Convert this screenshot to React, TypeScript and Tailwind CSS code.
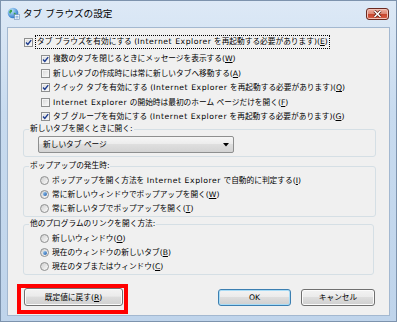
import type { ReactNode } from "react"

const font = "font-['DejaVu_Sans','Noto_Sans_CJK_JP',sans-serif]"

// latin runs are a bit wider in the original UI font
function Txt({ t }: { t: string }) {
  const parts = t.split("Internet Explorer")
  return (
    <>
      {parts.map((p, i) => (
        <span key={i}>
          {i > 0 && <span className="tracking-[0.55px]">Internet Explorer</span>}
          {p}
        </span>
      ))}
    </>
  )
}

function Key({ k }: { k: string }) {
  return (
    <>
      (<span className="underline underline-offset-[1px]">{k}</span>)
    </>
  )
}

function Check({ on }: { on?: boolean }) {
  return (
    <span className="flex h-[9px] w-[9px] shrink-0 items-center justify-center border border-[#8e8f8f] bg-gradient-to-br from-[#d6d6d6] to-[#fbfbfb] shadow-[inset_0_0_0_1px_#f4f4f4]">
      {on && (
        <svg viewBox="0 0 7 7" className="h-[7px] w-[7px]">
          <path d="M1 3.6 L2.8 5.5 L6.2 1.1" fill="none" stroke="#1c3b8f" strokeWidth="1.4" />
        </svg>
      )}
    </span>
  )
}

function Radio({ on }: { on?: boolean }) {
  return (
    <span className="flex h-[9px] w-[9px] shrink-0 items-center justify-center rounded-full border border-[#8e8f8f] bg-gradient-to-br from-[#cfcfcf] to-[#fbfbfb]">
      {on && <span className="h-[4px] w-[4px] rounded-full bg-gradient-to-br from-[#9fd0f7] to-[#1d5aa6]" />}
    </span>
  )
}

function Btn({ children, def, className = "" }: { children: ReactNode; def?: boolean; className?: string }) {
  return (
    <div
      className={`flex items-center justify-center rounded-[3px] border text-[7.7px] leading-none bg-[linear-gradient(#f3f3f3_0%,#ebebeb_45%,#dddddd_50%,#cfcfcf_100%)] ${
        def ? "border-[#3c7fb1] shadow-[inset_0_0_0_1px_#a9dcf6]" : "border-[#707070] shadow-[inset_0_0_0_1px_#fbfbfb]"
      } ${className}`}
    >
      {children}
    </div>
  )
}

const subs = [
  { t: "複数のタブを閉じるときにメッセージを表示する", k: "W", on: true },
  { t: "新しいタブの作成時には常に新しいタブへ移動する", k: "A", on: false },
  { t: "クイック タブを有効にする (Internet Explorer を再起動する必要があります)", k: "Q", on: true },
  { t: "Internet Explorer の開始時は最初のホーム ページだけを開く", k: "F", on: false },
  { t: "タブ グループを有効にする (Internet Explorer を再起動する必要があります)", k: "G", on: true },
]

const popups = [
  { t: "ポップアップを開く方法を Internet Explorer で自動的に判定する", k: "I", on: false },
  { t: "常に新しいウィンドウでポップアップを開く", k: "W", on: true },
  { t: "常に新しいタブでポップアップを開く", k: "T", on: false },
]

const links = [
  { t: "新しいウィンドウ", k: "O", on: false },
  { t: "現在のウィンドウの新しいタブ", k: "B", on: true },
  { t: "現在のタブまたはウィンドウ", k: "C", on: false },
]

function RadioRows({ items }: { items: { t: string; k: string; on: boolean }[] }) {
  return (
    <>
      {items.map((r) => (
        <div key={r.t} className="ml-[11px] flex h-[14px] items-center">
          <Radio on={r.on} />
          <span className="ml-[3px] whitespace-nowrap">
            <Txt t={r.t} />
            <Key k={r.k} />
          </span>
        </div>
      ))}
    </>
  )
}

export default function App() {
  return (
    <div
      className={`${font} flex h-[322px] w-[397px] flex-col border border-[#7d93ad] bg-[linear-gradient(180deg,#dde9f6_0%,#c8dbef_35%,#bfd4eb_100%)] text-black`}
    >
      {/* title bar */}
      <div className="flex h-[26px] shrink-0 items-start">
        <svg viewBox="0 0 13 13" className="ml-[6px] mt-[6px] h-[13px] w-[13px]">
          <defs>
            <radialGradient id="globe" cx="0.35" cy="0.3" r="0.8">
              <stop offset="0" stopColor="#c4e8ff" />
              <stop offset="1" stopColor="#1c6cc4" />
            </radialGradient>
          </defs>
          <circle cx="6" cy="6" r="5.3" fill="url(#globe)" />
          <path d="M3 3.3 C4 2.4 5.6 2.9 5.1 4.4 C4.6 5.5 3.1 5.4 3.5 7 C2 6.5 1.8 4.4 3 3.3Z" fill="#3aa34a" />
          <path d="M6.8 5.8 C8.3 5.3 9.4 6.6 8.6 8 C7.9 9 6.8 8.8 6.9 7.8 Z" fill="#3aa34a" />
          <rect x="7.6" y="7.6" width="4.8" height="4.8" fill="#fff" stroke="#6a8bb5" strokeWidth="0.6" />
          <path d="M8.5 9.3h3M8.5 10.9h3" stroke="#3c7fc8" strokeWidth="0.7" />
        </svg>
        <span className="ml-[3px] mt-[7px] whitespace-nowrap text-[9.6px] leading-[12px]">タブ ブラウズの設定</span>
        <div className="ml-auto mr-[7px] mt-[7px] flex h-[12px] w-[23px] items-center justify-center rounded-[3px] border border-[#6b2a20] bg-[linear-gradient(#efb1a4_0%,#de8a77_45%,#c8472f_55%,#d8604a_100%)] shadow-[inset_0_0_0_1px_#f3c3b8]">
          <svg viewBox="0 0 9 8" className="h-[8px] w-[9px]">
            <path d="M1.5 1 L7.5 7 M7.5 1 L1.5 7" stroke="#5a1a10" strokeWidth="3" />
            <path d="M1.5 1 L7.5 7 M7.5 1 L1.5 7" stroke="#fff" strokeWidth="1.6" />
          </svg>
        </div>
      </div>

      {/* client area */}
      <div className="mx-[6px] mb-[5px] flex flex-1 flex-col border border-[#a3b8d0] bg-[#f0f0f0] pl-[9px] pt-[7px] text-[7.7px] leading-none">
        <div className="flex h-[14px] items-center">
          <span className="ml-[7px]">
            <Check on />
          </span>
          <span className="ml-[2px] whitespace-nowrap border border-dotted border-black px-[1px] leading-[12px]">
            <Txt t="タブ ブラウズを有効にする (Internet Explorer を再起動する必要があります)" />
            <Key k="E" />
          </span>
        </div>

        <div className="mt-[3px] flex flex-col">
          {subs.map((s) => (
            <div key={s.t} className="ml-[24px] flex h-[14.4px] items-center">
              <Check on={s.on} />
              <span className="ml-[3px] whitespace-nowrap">
                <Txt t={s.t} />
                <Key k={s.k} />
              </span>
            </div>
          ))}
        </div>

        <fieldset className="ml-[6px] mt-[0.5px] w-[353px] rounded-[3px] border border-[#d5dfe5] pb-[3px] pl-[5px]">
          <legend className="px-[1px] leading-[10px]">新しいタブを開くときに開く:</legend>
          <div className="ml-[9px] mt-[2px] flex h-[17px] w-[196px] items-center rounded-[2px] border border-[#8e8f8f] bg-[linear-gradient(#f6f6f6_0%,#ececec_45%,#dedede_50%,#d3d3d3_100%)] pl-[4px] pr-[4px]">
            <span className="whitespace-nowrap">新しいタブ ページ</span>
            <svg viewBox="0 0 6 4" className="ml-auto h-[4px] w-[6px]">
              <path d="M0 0 H6 L3 3.5 Z" fill="#000" />
            </svg>
          </div>
        </fieldset>

        <fieldset className="ml-[6px] mt-[4px] w-[353px] rounded-[3px] border border-[#d5dfe5] pb-[1px] pl-[5px]">
          <legend className="px-[1px] leading-[10px]">ポップアップの発生時:</legend>
          <div className="mt-[2px]">
            <RadioRows items={popups} />
          </div>
        </fieldset>

        <fieldset className="ml-[6px] mt-[2px] w-[351px] rounded-[3px] border border-[#d5dfe5] pl-[5px]">
          <legend className="px-[1px] leading-[10px]">他のプログラムのリンクを開く方法:</legend>
          <div className="mt-[2.5px]">
            <RadioRows items={links} />
          </div>
        </fieldset>

        <div className="mt-[9.5px] flex items-start">
          <div className="border-4 border-[#ff0000] pb-[4px] pl-[3px] pr-[1px]">
            <Btn className="h-[18px] w-[99px]">
              既定値に戻す
              <Key k="R" />
            </Btn>
          </div>
          <Btn def className="ml-[90px] mt-[5px] h-[17px] w-[73px]">
            OK
          </Btn>
          <Btn className="ml-[10px] mt-[5px] h-[17px] w-[74px]">キャンセル</Btn>
        </div>
      </div>
    </div>
  )
}
